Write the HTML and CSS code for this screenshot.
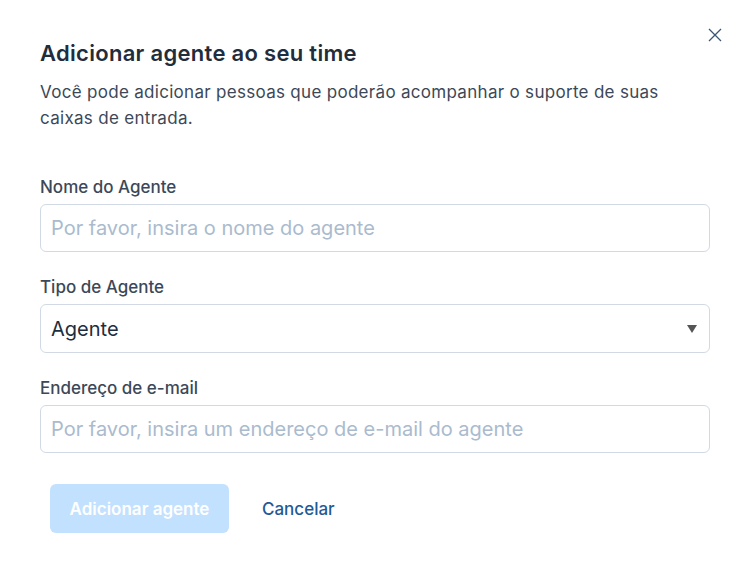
FILE: index.html
```html
<!DOCTYPE html>
<html lang="pt-BR">
<head>
<meta charset="utf-8">
<title>Adicionar agente</title>
<link rel="stylesheet" href="styles.css">
</head>
<body>
<div class="modal">
  <button class="close" aria-label="Fechar">
    <svg width="14" height="14" viewBox="0 0 14 14"><path d="M1 1L13 13M13 1L1 13" stroke="#3b5672" stroke-width="1.3" fill="none"/></svg>
  </button>
  <header class="head">
    <h2 class="title">Adicionar agente ao seu time</h2>
    <p class="desc">Você pode adicionar pessoas que poderão acompanhar o suporte de suas caixas de entrada.</p>
  </header>
  <form class="form">
    <label class="field">
      <span class="label">Nome do Agente</span>
      <input class="input" type="text" placeholder="Por favor, insira o nome do agente">
    </label>
    <label class="field">
      <span class="label">Tipo de Agente</span>
      <span class="select">
        <span class="select-value">Agente</span>
        <span class="caret"></span>
      </span>
    </label>
    <label class="field">
      <span class="label">Endereço de e-mail</span>
      <input class="input" type="text" placeholder="Por favor, insira um endereço de e-mail do agente">
    </label>
    <div class="actions">
      <button type="button" class="btn-primary">Adicionar agente</button>
      <button type="button" class="btn-link">Cancelar</button>
    </div>
  </form>
</div>
</body>
</html>
```
FILE: styles.css
```css
* { box-sizing: border-box; }
html, body { margin: 0; padding: 0; background: #fff; }
body { font-family: Inter, "Noto Sans", sans-serif; color: #3c4858; }
.modal {
  position: relative;
  width: 746px;
  height: 583px;
  background: #fff;
  padding: 37px 36px 0 40px;
}
.close {
  position: absolute;
  top: 28px;
  left: 708px;
  width: 14px;
  height: 14px;
  padding: 0;
  border: 0;
  background: none;
  display: flex;
}
.title {
  margin: 0;
  font-size: 22px;
  line-height: 32px;
  font-weight: 600;
  letter-spacing: 0.3px;
  color: #1f2d3d;
}
.desc {
  margin: 10px 0 0;
  max-width: 640px;
  font-size: 17px;
  line-height: 26px;
  letter-spacing: 0.3px;
  color: #3c4858;
}
.form { display: flex; flex-direction: column; margin-top: 45px; width: 670px; }
.field { display: flex; flex-direction: column; margin-bottom: 24px; }
.label {
  font-size: 17px;
  line-height: 22px;
  font-weight: 500;
  color: #3c4858;
  margin-bottom: 6px;
}
.input, .select {
  height: 48px;
  border: 1px solid #d1dae4;
  border-radius: 6px;
  padding: 0 10px;
  font-family: inherit;
  font-size: 20px;
  color: #1f2d3d;
  background: #fff;
}
.input::placeholder { color: #aabbce; }
.select { display: flex; align-items: center; justify-content: space-between; height: 49px; }
.select-value { color: #1f2d3d; }
.caret {
  width: 0; height: 0;
  border-left: 5px solid transparent;
  border-right: 5px solid transparent;
  border-top: 8px solid #555;
  margin-right: 2px;
}
.actions { display: flex; align-items: center; gap: 33px; margin-top: 7px; padding-left: 10px; }
.btn-primary {
  width: 179px;
  height: 49px;
  padding: 0;
  border: 0;
  border-radius: 6px;
  background: #c2e1ff;
  color: #fff;
  font-family: inherit;
  font-size: 17px;
  font-weight: 600;
}
.btn-link {
  border: 0;
  background: none;
  padding: 0;
  font-family: inherit;
  font-size: 17px;
  font-weight: 500;
  color: #1f5a96;
}
```
